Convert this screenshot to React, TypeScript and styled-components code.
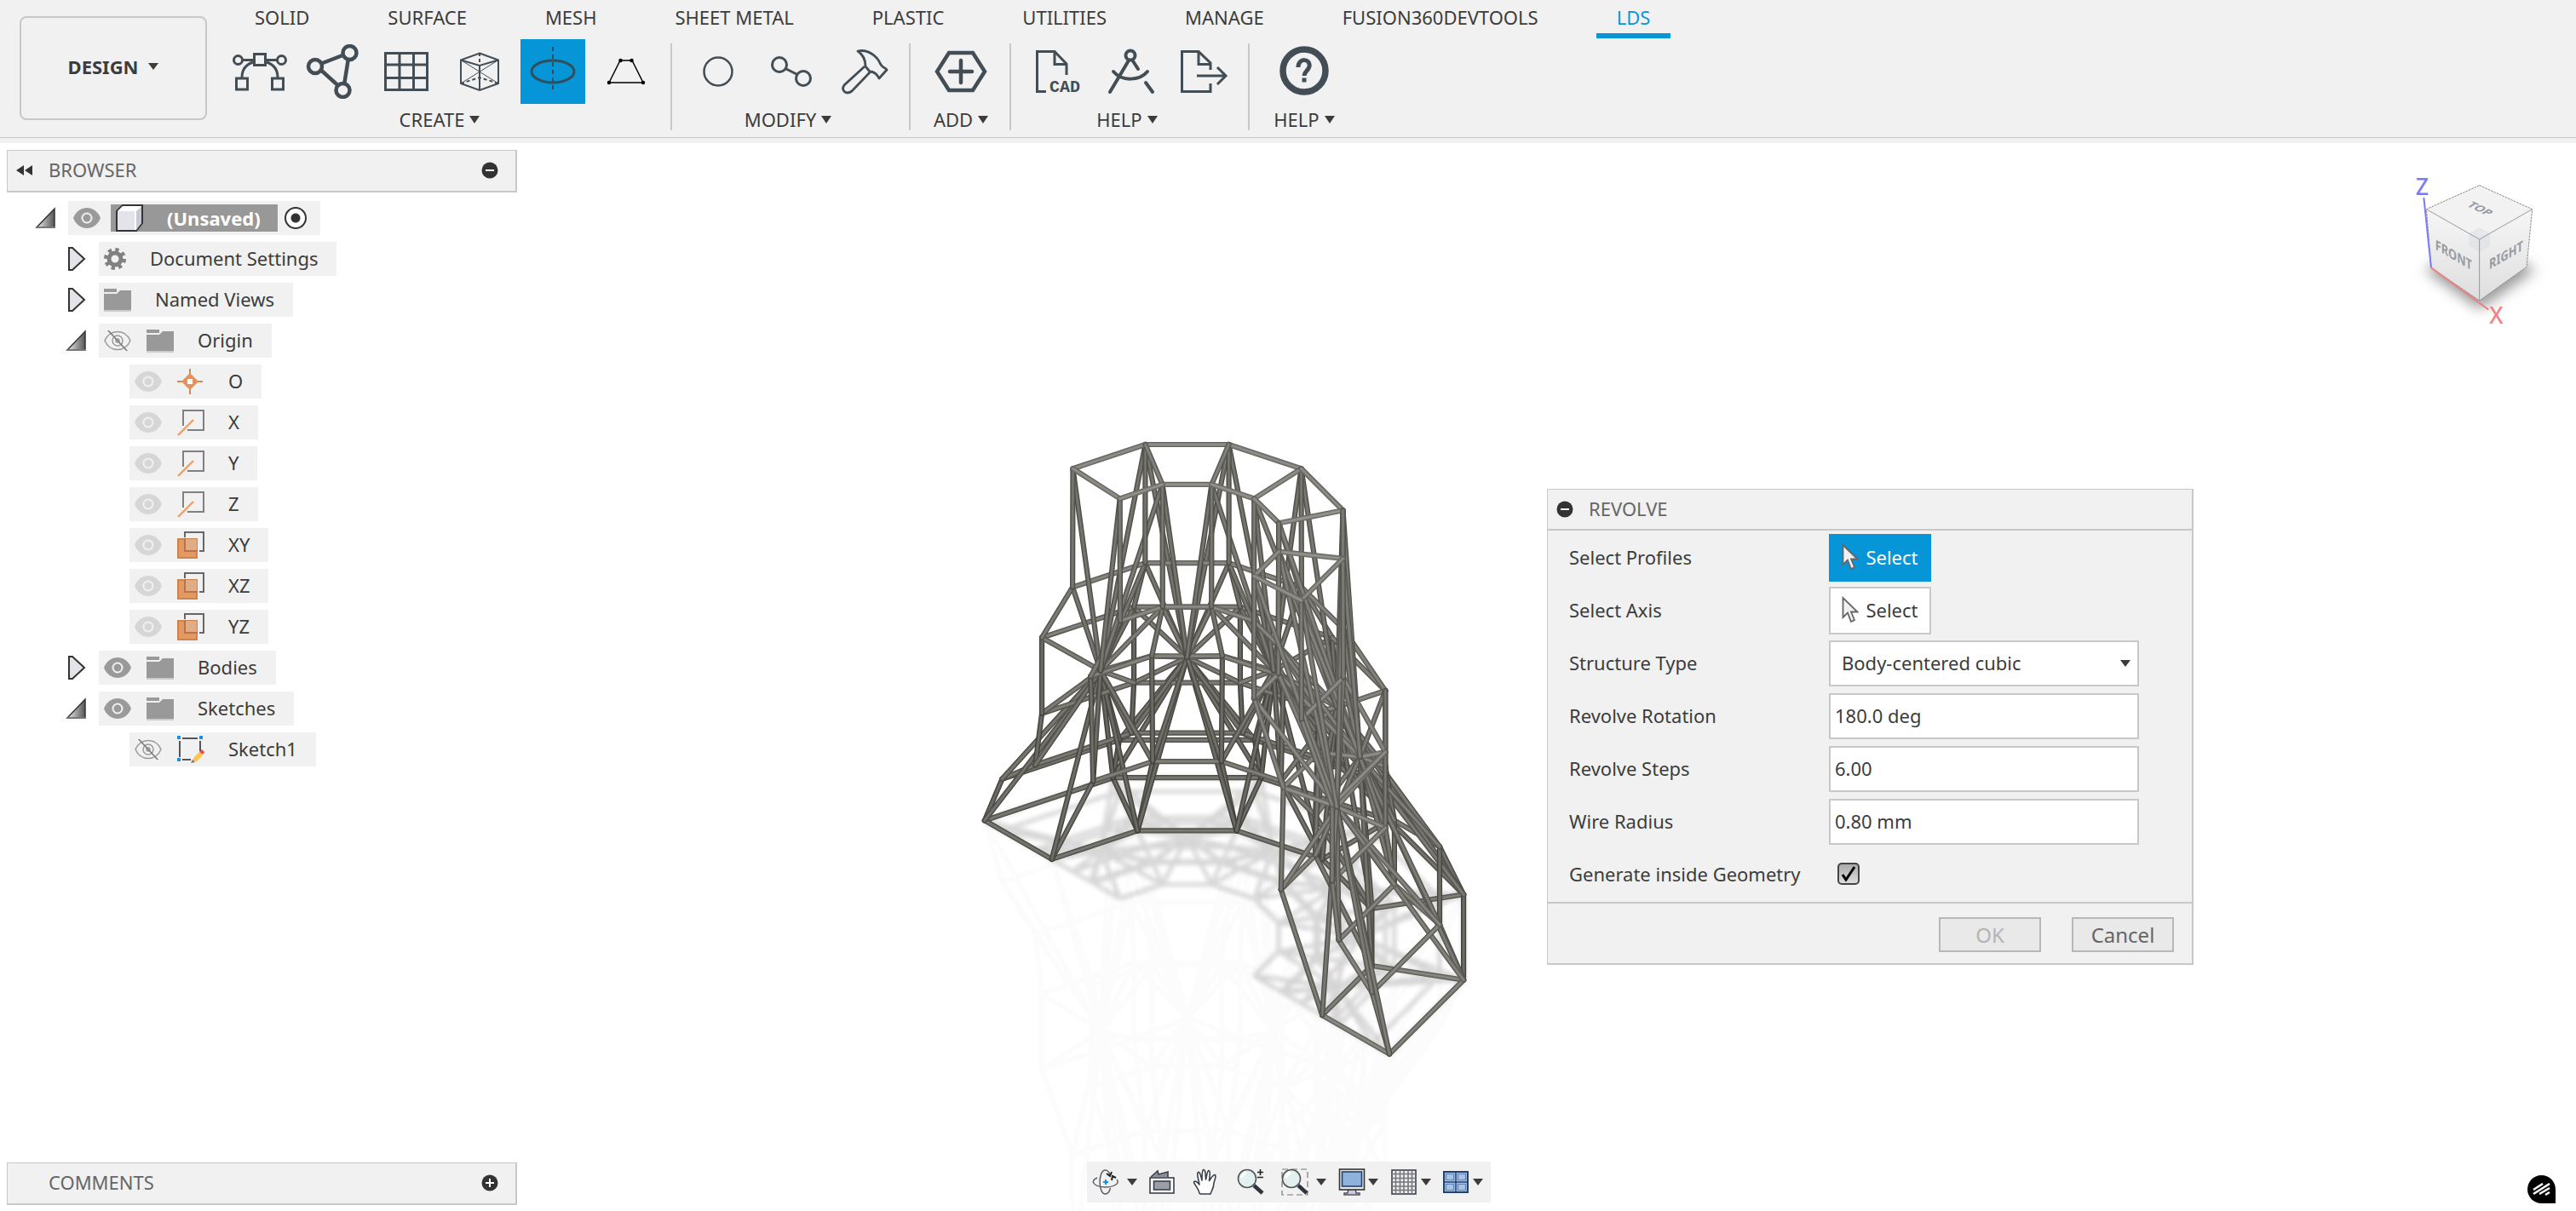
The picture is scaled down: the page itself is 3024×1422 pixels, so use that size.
import React, { useState } from "react";
import styled, { createGlobalStyle, css } from "styled-components";

const c = {
  panel: "#f1f1f1",
  line: "#c8c8c8",
  text: "#3c3c3c",
  muted: "#666666",
  blue: "#0696d7",
  ink: "#434d56",
};
const font = `"Noto Sans", "Open Sans", sans-serif`;

const GlobalStyle = createGlobalStyle`
  *, *::before, *::after { box-sizing: border-box; }
  body { margin: 0; background: #fff; color: ${c.text}; font-family: ${font}; font-size: 22px; line-height: 28px; }
  button, input, select { font: inherit; color: inherit; }
  svg { display: block; flex: none; }
`;

const Page = styled.div`
  display: flex;
  flex-direction: column;
  min-height: 100vh;
`;

/* ---------- ribbon ---------- */

const Ribbon = styled.header`
  display: flex;
  height: 168px;
  background: ${c.panel};
  box-shadow: inset 0 -6px 0 ${c.panel}, inset 0 -7px 0 ${c.line};
`;

const PlainButton = styled.button`
  display: flex;
  align-items: center;
  justify-content: center;
  padding: 0;
  border: 0;
  background: none;
`;

const WorkspaceButton = styled(PlainButton)`
  width: 220px;
  height: 122px;
  margin: 19px 24px 0 23px;
  padding-bottom: 4px;
  gap: 12px;
  border: 2px solid ${c.line};
  border-radius: 8px;
  font-weight: 700;
`;

const RibbonMain = styled.div`
  display: flex;
  flex-direction: column;
`;

const Tabs = styled.nav`
  display: flex;
  gap: 44px;
  padding-left: 8px;
  height: 46px;
`;

const Tab = styled.a<{ $active?: boolean }>`
  height: 45px;
  padding: 6px 24px 0;
  color: ${(p) => (p.$active ? c.blue : c.text)};
  text-decoration: none;
  border-bottom: 6px solid ${(p) => (p.$active ? c.blue : "transparent")};
`;

const Groups = styled.div`
  display: flex;
`;

const Group = styled.section`
  display: flex;
  flex-direction: column;
  align-items: center;
  padding: 0 16px;
  position: relative;

  &:first-child { padding-left: 0; }
  & + &::before {
    content: "";
    position: absolute;
    left: -2px;
    top: 5px;
    width: 2px;
    height: 102px;
    background: ${c.line};
  }
`;

const Tools = styled.div<{ $min?: number }>`
  display: flex;
  justify-content: center;
  gap: 10px;
  min-width: ${(p) => p.$min ?? 0}px;
`;

const Tool = styled(PlainButton)<{ $active?: boolean }>`
  width: 76px;
  height: 76px;
  background: ${(p) => (p.$active ? c.blue : "none")};
`;

const GroupMenu = styled(PlainButton)<{ $wide: boolean }>`
  gap: 6px;
  margin-top: 4px;
  padding-right: ${(p) => (p.$wide ? 8 : 0)}px;
`;

const Caret = ({ w = 12, h = 9, fill = "#3c3c3c" }) => (
  <svg width={w} height={h} viewBox="0 0 12 9" preserveAspectRatio="none" aria-hidden="true">
    <path d="M0 0H12L6 9Z" fill={fill} />
  </svg>
);

const Line = ({ children, w = 2.4, size = 64 }: { children: React.ReactNode; w?: number; size?: number }) => (
  <svg width={size} height={size} viewBox="0 0 64 64" fill="none" stroke={c.ink} strokeWidth={w} aria-hidden="true">
    {children}
  </svg>
);

const icons: Record<string, React.ReactNode> = {
  bezier: (
    <Line w={3}>
      <path d="M12 18.500H52" />
      <path d="M24 21C15 24 11 30 11 39M40 21C49 24 53 30 53 39" />
      <circle cx="6.500" cy="18.500" r="5" fill={c.panel} />
      <circle cx="57.500" cy="18.500" r="5" fill={c.panel} />
      <rect x="25.500" y="11.500" width="13" height="13" fill={c.panel} />
      <rect x="4.500" y="40" width="13" height="13" fill={c.panel} />
      <rect x="46.500" y="40" width="13" height="13" fill={c.panel} />
    </Line>
  ),
  triangle: (
    <Line w={4.5}>
      <path d="M12 25L51 10L44 54Z" />
      <circle cx="11" cy="26" r="8" fill={c.panel} />
      <circle cx="51.500" cy="10" r="8" fill={c.panel} />
      <circle cx="43.500" cy="54" r="8" fill={c.panel} />
    </Line>
  ),
  grid: (
    <Line w={3}>
      <rect x="7.500" y="10.500" width="49" height="43" />
      <path d="M24 10V54M40.500 10V54M7 24H57M7 39.500H57" />
    </Line>
  ),
  lattice: (
    <Line w={2}>
      <path d="M32 10.500L54 18.500V46L32 54L10 46V18.500ZM10 18.500L32 25L54 18.500M32 25V54" />
      <path d="M10 18.500L54 46M54 18.500L10 46" strokeWidth="1" />
      <path d="M32 10V25M10 46L32 39L54 46" strokeDasharray="4 3" />
    </Line>
  ),
  revolve: (
    <Line w={3}>
      <ellipse cx="32" cy="32" rx="25" ry="13" stroke="#2f4f5c" />
      <path d="M32 3V57" strokeWidth="2" stroke="#2f4f5c" strokeDasharray="5 4" />
    </Line>
  ),
  trapezoid: (
    <svg width="64" height="64" viewBox="0 0 64 64" fill="#000" stroke="#000" strokeWidth="1.500" aria-hidden="true">
      <path d="M12 45L25 19H39L52 45Z" fill="none" />
      <circle cx="12" cy="45" r="1.500" />
      <circle cx="25.500" cy="19" r="1.500" />
      <circle cx="38.500" cy="19" r="1.500" />
      <circle cx="52" cy="45" r="1.500" />
    </svg>
  ),
  circle: (
    <Line w={2.5}>
      <circle cx="32" cy="32" r="16.500" />
    </Line>
  ),
  link: (
    <Line w={3}>
      <circle cx="18" cy="24" r="8.500" />
      <circle cx="46" cy="40" r="8.500" />
      <path d="M25 28.500L39 35.500" />
    </Line>
  ),
  hammer: (
    <Line w={2.8}>
      <path d="M24 8C34 6 41 10 47 17C51 22 50 26 56 28L58 30L49 40C46 34 43 32 38 32L33 26C33 18 30 12 24 8Z" strokeLinejoin="round" />
      <path d="M32 26L8 48C4 54 10 60 17 55L39 32" />
    </Line>
  ),
  add: (
    <Line w={4.5}>
      <path d="M18 10H46L60 32L46 54H18L4 32Z" />
      <path d="M32 19V45M19 32H45" strokeLinecap="round" />
    </Line>
  ),
  cad: (
    <svg width="64" height="64" viewBox="0 0 64 64" fill="none" stroke={c.ink} strokeWidth="3" aria-hidden="true">
      <path d="M19 55.500H8.500V8.500H29L43 23V36M29 9V23.500H43" />
      <text x="23" y="56" fontFamily="Liberation Mono, monospace" fontWeight="700" fontSize="20" fill={c.ink} stroke="none">CAD</text>
    </svg>
  ),
  compass: (
    <Line w={4}>
      <circle cx="32" cy="13" r="5.500" />
      <path d="M30 19L8 56M34.500 19L41 29M50 45L58 56" strokeLinecap="round" />
      <path d="M12 32C22 44 43 43 52 32" strokeLinecap="round" />
    </Line>
  ),
  export: (
    <Line w={3}>
      <path d="M40 46V55.500H6.500V8.500H26L40 22V30M26 9V23.500H40" />
      <path d="M24 37H58M48 27L58 37L48 47" />
    </Line>
  ),
  help: (
    <svg width="64" height="64" viewBox="0 0 64 64" fill="none" stroke={c.ink} aria-hidden="true">
      <circle cx="32" cy="31" r="25" strokeWidth="7.500" />
      <path d="M25 27C25 15 40 17 38 26C37 31 32 32 32 37" strokeWidth="5" />
      <path d="M32 39.500V44.500" strokeWidth="5" />
    </svg>
  ),
};

const ribbonGroups = [
  { label: "CREATE", tools: ["bezier", "triangle", "grid", "lattice", "revolve", "trapezoid"] },
  { label: "MODIFY", tools: ["circle", "link", "hammer"] },
  { label: "ADD", tools: ["add"], min: 86 },
  { label: "HELP", tools: ["cad", "compass", "export"] },
  { label: "HELP", tools: ["help"], min: 96 },
];
const tabs = ["SOLID", "SURFACE", "MESH", "SHEET METAL", "PLASTIC", "UTILITIES", "MANAGE", "FUSION360DEVTOOLS", "LDS"];

/* ---------- workspace ---------- */

const Workspace = styled.main`
  position: relative;
  display: flex;
  flex: 1;
  min-height: 1254px;
`;

const Canvas = styled.div`
  position: absolute;
  inset: 0;
  display: flex;
  justify-content: center;
  align-items: flex-end;
  overflow: hidden;
`;

const Dock = styled.aside`
  position: relative;
  display: flex;
  flex-direction: column;
  justify-content: space-between;
  width: 608px;
  padding: 8px 1px 7px 8px;
`;

const PanelHeader = styled.div`
  display: flex;
  align-items: center;
  height: 50px;
  padding: 0 20px 2px 10px;
  background: ${c.panel};
  border: 2px solid ${c.line};
  border-width: 1px 2px 2px 1px;
  color: ${c.muted};
`;

const HeaderIcon = styled(PlainButton)`
  width: 20px;
  height: 20px;
`;

const HeaderTitle = styled.h2`
  flex: 1;
  margin: 0;
  padding: 0 0 2px 18px;
  font-size: 22px;
  font-weight: 400;
`;

const Tree = styled.ul`
  display: flex;
  flex-direction: column;
  gap: 8px;
  margin: 10px 0 0;
  padding: 0;
  list-style: none;
`;

const TreeRow = styled.li<{ $depth: number }>`
  display: flex;
  align-items: center;
  gap: 8px;
  height: 40px;
  padding-left: ${(p) => 28 + p.$depth * 36}px;
`;

const Toggle = styled(PlainButton)`
  width: 36px;
  height: 36px;
`;

const TreeItem = styled.div<{ $root?: boolean }>`
  display: flex;
  align-items: center;
  height: 40px;
  padding: 0 ${(p) => (p.$root ? 16 : 22)}px 0 6px;
  gap: ${(p) => (p.$root ? 12 : 18)}px;
  background: ${c.panel};
`;

const TreeLabel = styled.span`
  padding: 0 0 2px 10px;
`;

const RootLabel = styled.span`
  display: flex;
  align-items: center;
  gap: 28px;
  height: 32px;
  padding: 0 20px 0 6px;
  background: #989898;
  color: #fff;
  font-weight: 700;
`;

const RootRadio = styled.input`
  appearance: none;
  width: 26px;
  height: 26px;
  margin: 0 0 0 -4px;
  border: 2px solid #333;
  border-radius: 50%;
  background: radial-gradient(circle, #333 0 5px, #fff 6px);
`;

const Eye = ({ tone = "#9a9a9a", off = false }) => (
  <svg width="32" height="24" viewBox="0 0 32 24" aria-hidden="true">
    {off ? (
      <g fill="none" stroke={tone} strokeWidth="1.500">
        <path d="M1 12C7 -2 25 -2 31 12C25 26 7 26 1 12Z" />
        <circle cx="16" cy="12" r="6" />
        <circle cx="16" cy="12" r="2" />
        <path d="M4 -1L28 25" stroke="#777" />
      </g>
    ) : (
      <>
        <path d="M0 12C6 -4 26 -4 32 12C26 28 6 28 0 12Z" fill={tone} />
        <circle cx="16" cy="12" r="5.500" fill="none" stroke="#f1f1f1" strokeWidth="2" />
      </>
    )}
  </svg>
);

const Folder = () => (
  <svg width="32" height="28" viewBox="0 0 32 28" aria-hidden="true">
    <path d="M0 1H15V5H0ZM0 7H15L19 3H32V26H0Z" fill="#999" />
    <path d="M0 27H32" stroke="#ccc" strokeWidth="2" />
  </svg>
);

const Gear = () => (
  <svg width="26" height="26" viewBox="0 0 26 26" fill="none" stroke="#808080" aria-hidden="true">
    <circle cx="13" cy="13" r="7" strokeWidth="5" />
    <circle cx="13" cy="13" r="11" strokeWidth="4" strokeDasharray="4.300 4.340" />
  </svg>
);

const Cube = () => (
  <svg width="32" height="32" viewBox="0 0 32 32" aria-hidden="true">
    <path d="M1 8L8 1H31V22L24 31H1Z" fill="#e2e4ea" stroke="#333" strokeWidth="2" />
    <path d="M2 8L8 2H30L24 8Z" fill="#fff" />
    <path d="M24 8L30 3V22L24 30Z" fill="#c5c9d1" />
    <path d="M23 8V30" stroke="#fff" strokeWidth="2" />
  </svg>
);

const OriginPoint = () => (
  <svg width="32" height="32" viewBox="0 0 32 32" aria-hidden="true">
    <path d="M15 1V31M0 16H30" stroke="#d08b5a" strokeWidth="2" />
    <path d="M15 6L25 16L15 26L5 16Z" fill="#e2925a" />
    <rect x="12" y="13" width="6" height="6" fill="#fff" />
  </svg>
);

const Axis = () => (
  <svg width="32" height="32" viewBox="0 0 32 32" fill="none" aria-hidden="true">
    <path d="M7 20V2H31V25H12" stroke="#808080" strokeWidth="2" />
    <path d="M1 31L19 13" stroke="#e8a070" strokeWidth="2.400" />
  </svg>
);

const Plane = () => (
  <svg width="32" height="32" viewBox="0 0 32 32" fill="none" aria-hidden="true">
    <path d="M9 7V1H31V23H26" stroke="#666" strokeWidth="2" />
    <rect x="1" y="9" width="22" height="22" fill="#e5985f" stroke="#cc8350" strokeWidth="2" />
    <rect x="9" y="9" width="14" height="14" fill="#e0ac86" />
    <path d="M9 8V23H24" stroke="#b5744b" strokeWidth="2" />
  </svg>
);

const Sketch = () => (
  <svg width="32" height="32" viewBox="0 0 32 32" fill="none" aria-hidden="true">
    <path d="M6 3H24M3 6V25M27 6V18M6 28H16" stroke="#555" strokeWidth="2" />
    <path d="M0 0H4V4H0ZM26 0H30V4H26ZM0 26H4V30H0Z" fill="#1a8fe8" />
    <path d="M17 31L20 25L26 19L30 23L23 30Z" fill="#ffc24a" />
    <path d="M26 19L29 16L32 19L30 22Z" fill="#f04848" />
    <path d="M16 32L18 28L21 31Z" fill="#777" />
  </svg>
);

const Expanded = () => (
  <svg width="26" height="26" viewBox="0 0 26 26" aria-hidden="true">
    <defs>
      <linearGradient id="fold" x1="0" y1="0" x2="1" y2="0">
        <stop offset="0" stopColor="#eee" />
        <stop offset="1" stopColor="#555" />
      </linearGradient>
    </defs>
    <path d="M2 24L23 2V24Z" fill="url(#fold)" stroke="#333" strokeWidth="1.500" />
    <path d="M1 24H24" stroke="#777" strokeWidth="2" />
  </svg>
);

const Collapsed = () => (
  <svg width="22" height="30" viewBox="0 0 22 30" aria-hidden="true">
    <path d="M2 2H6L20 15L6 28H2Z" fill="#e4e4e8" stroke="#333" strokeWidth="2" />
  </svg>
);

const dim = "#d6d6d6";
type Node = { label: string; depth: number; open?: boolean; parts: React.ReactNode[] };
const tree: Node[] = [
  { label: "Document Settings", depth: 1, open: false, parts: [<Gear />] },
  { label: "Named Views", depth: 1, open: false, parts: [<Folder />] },
  { label: "Origin", depth: 1, open: true, parts: [<Eye off />, <Folder />] },
  { label: "O", depth: 2, parts: [<Eye tone={dim} />, <OriginPoint />] },
  { label: "X", depth: 2, parts: [<Eye tone={dim} />, <Axis />] },
  { label: "Y", depth: 2, parts: [<Eye tone={dim} />, <Axis />] },
  { label: "Z", depth: 2, parts: [<Eye tone={dim} />, <Axis />] },
  { label: "XY", depth: 2, parts: [<Eye tone={dim} />, <Plane />] },
  { label: "XZ", depth: 2, parts: [<Eye tone={dim} />, <Plane />] },
  { label: "YZ", depth: 2, parts: [<Eye tone={dim} />, <Plane />] },
  { label: "Bodies", depth: 1, open: false, parts: [<Eye />, <Folder />] },
  { label: "Sketches", depth: 1, open: true, parts: [<Eye />, <Folder />] },
  { label: "Sketch1", depth: 2, parts: [<Eye off />, <Sketch />] },
];

const RoundMark = ({ plus = false }) => (
  <svg width="20" height="20" viewBox="0 0 20 20" aria-hidden="true">
    <circle cx="10" cy="10" r="9.500" fill="#333" />
    <path d={plus ? "M5 10H15M10 5V15" : "M5 10H15"} stroke="#fff" strokeWidth="2" />
  </svg>
);

/* ---------- lattice model ---------- */

/* Closed outline of one profile: radius from the axis and screen height of its centre. */
const outline: [number, number][] = [
  [111.5, 631], [189.5, 627.6], [190, 767], [241, 847], [241, 936], [252, 1001],
  [307, 1040], [336, 1100.5], [224.5, 1100.5], [156, 981], [160, 859.5], [111, 774.5],
];
const axisX = 1393.5;
const ground = 1100.5;
const hub: [number, number] = [203, 888.8];

type P3 = { r: number; c: number; a: number };
const point = (n: [number, number], deg: number): P3 => ({ r: n[0], c: n[1], a: (deg * Math.PI) / 180 });
const project = (p: P3, level = p.c) => [axisX + p.r * Math.cos(p.a), level - p.r * 0.577 * Math.sin(p.a)];
const depthOf = (p: P3) => ((ground - p.c) / 0.817) * 0.577 - p.r * Math.sin(p.a) * 0.817;

const struts: [P3, P3][] = [];
for (let k = 0; k <= 6; k++) {
  const deg = 135 - 30 * k;
  outline.forEach((n, i) => {
    struts.push([point(n, deg), point(outline[(i + 1) % outline.length], deg)]);
    if (k < 6) {
      struts.push([point(n, deg), point(n, deg - 30)]);
      struts.push([point(n, deg), point(hub, deg - 15)]);
      struts.push([point(n, deg - 30), point(hub, deg - 15)]);
    }
  });
}
struts.sort((p, q) => depthOf(p[0]) + depthOf(p[1]) - depthOf(q[0]) - depthOf(q[1]));

const segment = (s: [P3, P3], level: (c: number) => number) => {
  const [x1, y1] = project(s[0], level(s[0].c));
  const [x2, y2] = project(s[1], level(s[1].c));
  return `M${x1.toFixed(1)} ${y1.toFixed(1)}L${x2.toFixed(1)} ${y2.toFixed(1)}`;
};
const shadowPath = struts.map((s) => segment(s, () => ground)).join("");
const reflectionPath = struts.map((s) => segment(s, (v) => 2 * ground - v)).join("");

const grey = (v: number) => `rgb(${v},${v - 1},${v - 7})`;

const Scene = () => (
  <svg width="800" height="922" viewBox="1112 500 800 922" role="img" aria-label="Revolved wire lattice">
    <defs>
      <filter id="soft" x="-10%" y="-10%" width="120%" height="120%"><feGaussianBlur stdDeviation="2.500" /></filter>
    </defs>
    <path d={reflectionPath} stroke="#555" strokeWidth="6" fill="none" opacity="0.014" />
    <g opacity="0.19" filter="url(#soft)">
      <path d={shadowPath} stroke="#333" strokeWidth="5" fill="none" />
    </g>
    {struts.map((s, i) => {
      const [x1, y1] = project(s[0]);
      const [x2, y2] = project(s[1]);
      const flat = Math.abs(x2 - x1) / Math.hypot(x2 - x1, y2 - y1);
      const near = Math.min(1, Math.max(0, ((depthOf(s[0]) + depthOf(s[1])) / 2 + 150) / 420));
      const tone = Math.round(76 + 22 * flat + 26 * near);
      const d = segment(s, (v) => v);
      return (
        <g key={i} fill="none" strokeLinecap="round">
          <path d={d} stroke={grey(tone - 20)} strokeWidth="6.200" />
          <path d={d} stroke={grey(tone + 8)} strokeWidth="4" />
          <path d={d} stroke={grey(tone + 30)} strokeWidth="1.300" />
        </g>
      );
    })}
  </svg>
);

/* ---------- view cube ---------- */

const CubeSlot = styled.div`
  position: absolute;
  top: 12px;
  right: 0;
`;

const ViewCube = () => (
  <svg width="244" height="220" viewBox="0 0 732 660" role="img" aria-label="View cube">
    <defs>
      <filter id="cubeShade" x="-30%" y="-60%" width="160%" height="220%"><feGaussianBlur stdDeviation="24" /></filter>
      <linearGradient id="side" x1="0" y1="0" x2="0" y2="1">
        <stop offset="0" stopColor="#f6f6f6" />
        <stop offset="1" stopColor="#dedede" />
      </linearGradient>
    </defs>
    <path d="M200 410L392 310L590 410L392 550Z" fill="#999" filter="url(#cubeShade)" />
    <path d="M205 197L392 303V519L222 403Z" fill="url(#side)" />
    <path d="M578 197L392 303V519L558 400Z" fill="url(#side)" />
    <path d="M392 113L578 197L392 303L205 197Z" fill="#f2f2f2" />
    <path d="M392 262L429 282V326L392 347L355 326V282Z" fill="#d9dce2" opacity="0.500" />
    <g fill="none" stroke="#8a8a8a" strokeWidth="3">
      <path d="M392 113L578 197L558 400L392 519L222 403L205 197Z" strokeDasharray="8 3" />
      <path d="M205 197L392 303L578 197M392 303V519" stroke="#9a9a9a" />
    </g>
    <path d="M196 156L222 403" stroke="#7b7bf5" strokeWidth="6" />
    <path d="M222 403L424 551" stroke="#e88585" strokeWidth="6" />
    <g fontFamily={font} fontWeight="700" fill="#979ba2" textAnchor="middle">
      <text fontSize="44" transform="matrix(.88 .42 -.75 .5 383 203)">TOP</text>
      <text fontSize="48" transform="matrix(.8 .46 0 1 301 375)">FRONT</text>
      <text fontSize="48" transform="matrix(.8 -.46 0 1 486 375)">RIGHT</text>
    </g>
    <g fontFamily={font} fontSize="80" fontWeight="500" textAnchor="middle">
      <text x="190" y="148" fill="#7b7bf5">Z</text>
      <text x="451" y="601" fill="#f08585">X</text>
    </g>
  </svg>
);

/* ---------- revolve dialog ---------- */

const Dialog = styled.form`
  position: absolute;
  top: 406px;
  right: 449px;
  width: 759px;
  background: ${c.panel};
  border: 2px solid ${c.line};
  border-left-width: 1px;
  border-top-width: 1px;
`;

const DialogTitle = styled.div`
  display: flex;
  align-items: center;
  height: 48px;
  padding-left: 10px;
  border-bottom: 2px solid ${c.line};
  color: ${c.muted};
`;

const Fields = styled.div`
  display: grid;
  grid-template-columns: 280px 364px;
  grid-auto-rows: 56px;
  gap: 6px 25px;
  align-items: center;
  padding: 4px 0 4px 25px;
  border-bottom: 2px solid ${c.line};
`;

const FieldLabel = styled.label`
  padding-bottom: 2px;
`;

const SelectButton = styled(PlainButton)<{ $active?: boolean }>`
  width: 120px;
  height: 56px;
  gap: 8px;
  padding-bottom: 2px;
  background: #fff;
  border: 2px solid ${c.line};
  ${(p) =>
    p.$active &&
    css`
      background: ${c.blue};
      border-color: ${c.blue};
      color: #fff;
    `}
`;

const ComboWrap = styled.div`
  display: grid;
  align-items: center;
  & > * { grid-area: 1 / 1; }
  & > svg { justify-self: end; margin-right: 10px; pointer-events: none; }
`;

const field = css`
  width: 100%;
  height: 54px;
  background: #fff;
  border: 2px solid ${c.line};
  border-radius: 0;
  color: ${c.text};
`;

const Combo = styled.select`
  ${field}
  appearance: none;
  padding: 0 13px 2px;
`;

const TextField = styled.input`
  ${field}
  padding: 0 5px 2px;
`;

const CheckWrap = styled.div`
  display: grid;
  width: 26px;
  margin-left: 10px;
  padding-bottom: 2px;
  & > * { grid-area: 1 / 1; }
  & > svg { pointer-events: none; }
`;

const Check = styled.input`
  appearance: none;
  width: 26px;
  height: 26px;
  margin: 0;
  border: 2px solid #444;
  border-radius: 5px;
  background: linear-gradient(#aaa, #ddd);
`;

const Actions = styled.div`
  display: flex;
  justify-content: flex-end;
  gap: 36px;
  padding: 16px 21px 13px;
`;

const ActionButton = styled(PlainButton)`
  width: 120px;
  height: 41px;
  background: #e9e9e9;
  border: 2px solid #b8b8b8;
  font-size: 24px;
  color: ${c.muted};
  &:disabled { color: #b4b4b4; }
`;

const Pointer = ({ fill }: { fill: string }) => (
  <svg width="20" height="32" viewBox="0 0 20 32" aria-hidden="true">
    <path d="M1.500 2V25L7 19.500L11 30L15 28L11 18.500H18.500Z" fill={fill} stroke="#666" strokeWidth="1.800" />
  </svg>
);

/* ---------- navigation bar ---------- */

const NavBar = styled.div`
  position: absolute;
  left: 2px;
  right: 0;
  bottom: 10px;
  margin: 0 auto;
  display: flex;
  align-items: center;
  width: 474px;
  height: 48px;
  padding-left: 6px;
  background: ${c.panel};
`;

const NavTool = styled(PlainButton)<{ $gap: number }>`
  width: 32px;
  height: 40px;
  margin-right: ${(p) => p.$gap}px;
`;

const NavMenu = styled(PlainButton)<{ $gap: number }>`
  width: 12px;
  height: 40px;
  margin-right: ${(p) => p.$gap}px;
`;

const Glyph = ({ children }: { children: React.ReactNode }) => (
  <svg width="32" height="32" viewBox="0 0 32 32" fill="none" stroke="#3a3f4a" strokeWidth="1.600" aria-hidden="true">
    {children}
  </svg>
);

const Lens = () => (
  <>
    <path d="M20 20L30 29" stroke="#30343c" strokeWidth="4.500" />
    <circle cx="12" cy="12" r="10.500" fill="#e3f0f0" stroke="#555" />
    <path d="M6 11C6 8 8 6 11 5" stroke="#fff" strokeWidth="3" />
  </>
);

const nav = [
  {
    label: "Orbit", gap: 9, menu: 13,
    icon: (
      <Glyph>
        <g stroke="#555a63" strokeWidth="1.400">
          <path d="M21 8C20 4 18 2 15.500 2C7 2 7 30 15.500 30C18.500 30 20.500 27 21.500 23" />
          <path d="M6 11C-2 14 0 21 15 22C27 22 33 17 29 13" />
        </g>
        <path d="M17 6L21 9L23 4M23 14L24 9L28 11" stroke="#222" strokeWidth="2" />
        <path d="M13 16H19M16 13V19" stroke="#1a8fe8" strokeWidth="2" />
      </Glyph>
    ),
  },
  {
    label: "Look At", gap: 20,
    icon: (
      <Glyph>
        <path d="M3 10L11 3L12 7L23 4V10" fill="#8b9099" />
        <rect x="2" y="11" width="28" height="18" fill="#fff" />
        <rect x="6.500" y="15" width="19" height="10" fill="#9a9ea8" />
      </Glyph>
    ),
  },
  {
    label: "Pan", gap: 20,
    icon: (
      <Glyph>
        <path
          d="M8 29C7 24 3 20 1.500 16.500C2 14 5 15 8 19C7 13 5 8 6 5C8 3 9 6 11 14C11 8 11 3 12.500 1.500C15 1 15 5 15.500 13C17 8 17 3 19 2.500C21.500 3 20 9 19.500 14.500C22 11 24 7 26.500 7.500C28 9 26 13 25 17C25 22 23 25 21 30H9Z"
          fill="#fff"
          strokeLinejoin="round"
        />
      </Glyph>
    ),
  },
  {
    label: "Zoom", gap: 20,
    icon: (
      <Glyph>
        <Lens />
        <path d="M24 4.500H31M27.500 1V8M24 10.500H31" stroke="#222" />
      </Glyph>
    ),
  },
  {
    label: "Zoom Window", gap: 9, menu: 14,
    icon: (
      <Glyph>
        <rect x="1" y="1" width="30" height="30" stroke="#777" strokeWidth="1.200" strokeDasharray="7 4" />
        <Lens />
      </Glyph>
    ),
  },
  {
    label: "Display Settings", gap: 3, menu: 14,
    icon: (
      <Glyph>
        <path d="M12 24H20L21 29H25V31H7V29H11Z" fill="#ccd" stroke="#556" />
        <rect x="1.500" y="1" width="29" height="24" fill="#e6e8ee" stroke="#333" />
        <rect x="4.500" y="4" width="23" height="17" fill="#8fb2dd" stroke="#26406e" />
      </Glyph>
    ),
  },
  {
    label: "Grid and Snaps", gap: 4, menu: 13,
    icon: (
      <Glyph>
        <rect x="2" y="2" width="28" height="28" fill="#eceef2" />
        <path d="M6.500 2V30M11.500 2V30M16 2V30M21 2V30M25.500 2V30M2 6.500H30M2 11.500H30M2 16H30M2 21H30M2 25.500H30" stroke="#777" />
      </Glyph>
    ),
  },
  {
    label: "Viewports", gap: 4, menu: 0,
    icon: (
      <Glyph>
        <rect x="2" y="4" width="28" height="24" fill="#a7c4e4" stroke="#26406e" strokeWidth="2" />
        <path d="M16 4V28M2 16H30" stroke="#26406e" strokeWidth="1.500" />
        <path d="M4.500 6.500H13.500V13.500H4.500ZM18.500 6.500H27.500V13.500H18.500ZM4.500 18.500H13.500V25.500H4.500ZM18.500 18.500H27.500V25.500H18.500Z" stroke="#5b84b8" strokeWidth="1.200" />
      </Glyph>
    ),
  },
];

const Badge = styled(PlainButton)`
  position: absolute;
  right: 24px;
  bottom: 9px;
  width: 33px;
  height: 33px;
  background: #000;
  border-radius: 17px 17px 0 17px;
`;

export default function App() {
  const [structure, setStructure] = useState("Body-centered cubic");
  return (
    <Page>
      <GlobalStyle />
      <Ribbon>
        <WorkspaceButton>
          DESIGN <Caret w={12} h={8} />
        </WorkspaceButton>
        <RibbonMain>
          <Tabs>
            {tabs.map((t) => (
              <Tab key={t} href={`#${t}`} $active={t === "LDS"}>{t}</Tab>
            ))}
          </Tabs>
          <Groups>
            {ribbonGroups.map((g, i) => (
              <Group key={i}>
                <Tools $min={g.min}>
                  {g.tools.map((t) => (
                    <Tool key={t} aria-label={t} $active={t === "revolve"}>{icons[t]}</Tool>
                  ))}
                </Tools>
                <GroupMenu $wide={g.tools.length > 1}>
                  {g.label} <Caret />
                </GroupMenu>
              </Group>
            ))}
          </Groups>
        </RibbonMain>
      </Ribbon>

      <Workspace>
        <Canvas>
          <Scene />
        </Canvas>

        <Dock>
          <section>
            <PanelHeader>
              <HeaderIcon aria-label="Hide browser">
                <svg width="20" height="12" viewBox="0 0 20 12" aria-hidden="true">
                  <path d="M0 6L9 0V12ZM10 6L19 0V12Z" fill="#333" />
                </svg>
              </HeaderIcon>
              <HeaderTitle>BROWSER</HeaderTitle>
              <HeaderIcon aria-label="Collapse browser"><RoundMark /></HeaderIcon>
            </PanelHeader>
            <Tree>
              <TreeRow $depth={0}>
                <Toggle aria-label="Collapse document"><Expanded /></Toggle>
                <TreeItem $root>
                  <Eye />
                  <RootLabel><Cube />(Unsaved)</RootLabel>
                  <RootRadio type="radio" aria-label="Activate component" defaultChecked />
                </TreeItem>
              </TreeRow>
              {tree.map((n) => (
                <TreeRow key={n.label} $depth={n.depth}>
                  {n.open === undefined ? (
                    <Toggle as="span" />
                  ) : (
                    <Toggle aria-label={`Toggle ${n.label}`}>{n.open ? <Expanded /> : <Collapsed />}</Toggle>
                  )}
                  <TreeItem>
                    {n.parts.map((p, i) => <React.Fragment key={i}>{p}</React.Fragment>)}
                    <TreeLabel>{n.label}</TreeLabel>
                  </TreeItem>
                </TreeRow>
              ))}
            </Tree>
          </section>
          <PanelHeader>
            <HeaderIcon as="span" />
            <HeaderTitle>COMMENTS</HeaderTitle>
            <HeaderIcon aria-label="Expand comments"><RoundMark plus /></HeaderIcon>
          </PanelHeader>
        </Dock>

        <CubeSlot><ViewCube /></CubeSlot>

        <Dialog onSubmit={(e) => e.preventDefault()}>
          <DialogTitle>
            <HeaderIcon type="button" aria-label="Collapse"><RoundMark /></HeaderIcon>
            <HeaderTitle>REVOLVE</HeaderTitle>
          </DialogTitle>
          <Fields>
            <FieldLabel htmlFor="profiles">Select Profiles</FieldLabel>
            <SelectButton id="profiles" type="button" $active><Pointer fill="#f1f1f1" />Select</SelectButton>
            <FieldLabel htmlFor="axis">Select Axis</FieldLabel>
            <SelectButton id="axis" type="button"><Pointer fill="#f1f1f1" />Select</SelectButton>
            <FieldLabel htmlFor="structure">Structure Type</FieldLabel>
            <ComboWrap>
              <Combo id="structure" value={structure} onChange={(e) => setStructure(e.target.value)}>
                <option>Body-centered cubic</option>
              </Combo>
              <Caret w={12} h={8} />
            </ComboWrap>
            <FieldLabel htmlFor="rotation">Revolve Rotation</FieldLabel>
            <TextField id="rotation" defaultValue="180.0 deg" />
            <FieldLabel htmlFor="steps">Revolve Steps</FieldLabel>
            <TextField id="steps" defaultValue="6.00" />
            <FieldLabel htmlFor="radius">Wire Radius</FieldLabel>
            <TextField id="radius" defaultValue="0.80 mm" />
            <FieldLabel htmlFor="inside">Generate inside Geometry</FieldLabel>
            <CheckWrap>
              <Check id="inside" type="checkbox" defaultChecked />
              <svg width="26" height="26" viewBox="0 0 26 26" aria-hidden="true">
                <path d="M6 14L10 20L20 5" fill="none" stroke="#000" strokeWidth="3" />
              </svg>
            </CheckWrap>
          </Fields>
          <Actions>
            <ActionButton disabled>OK</ActionButton>
            <ActionButton type="button">Cancel</ActionButton>
          </Actions>
        </Dialog>

        <NavBar>
          {nav.map((n) => (
            <React.Fragment key={n.label}>
              <NavTool aria-label={n.label} $gap={n.gap}>{n.icon}</NavTool>
              {n.menu !== undefined && (
                <NavMenu aria-label={`${n.label} options`} $gap={n.menu}><Caret w={12} h={8} /></NavMenu>
              )}
            </React.Fragment>
          ))}
        </NavBar>

        <Badge aria-label="Assistant">
          <svg width="22" height="16" viewBox="0 0 22 16" stroke="#fff" strokeWidth="2.500" aria-hidden="true">
            <path d="M1 8L12 1M1 13L20 1M8 13L20 6M15 14L20 11" />
          </svg>
        </Badge>
      </Workspace>
    </Page>
  );
}
